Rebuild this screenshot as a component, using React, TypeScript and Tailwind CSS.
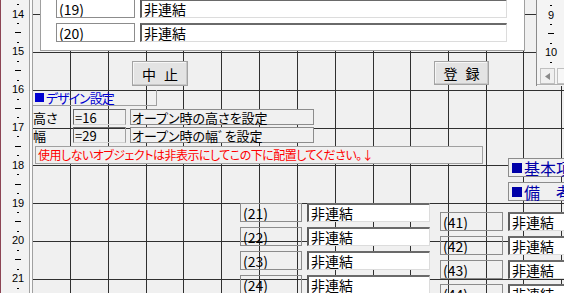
import React from "react";

const VX = [37, 75, 113, 150, 188, 226, 264, 302, 340, 377, 415, 453, 490, 528];
const HY = [14, 52, 90, 128, 165, 203, 241, 279];

function Grid() {
  return (
    <svg className="absolute inset-0" width="531" height="293" shapeRendering="crispEdges">
      {VX.map((x) => (
        <line key={"v" + x} x1={x + 0.5} y1={0} x2={x + 0.5} y2={293} stroke="#303030" strokeWidth={1} />
      ))}
      {HY.map((y) => (
        <line key={"h" + y} x1={0} y1={y + 0.5} x2={531} y2={y + 0.5} stroke="#303030" strokeWidth={1} />
      ))}
    </svg>
  );
}

function RulerSegment({ n }: { n: string }) {
  return (
    <div className="h-[37.8px] flex flex-col">
      <div className="h-[9.45px] flex items-center justify-center text-[11px] leading-none font-['Liberation_Sans',sans-serif] text-black">
        {n}
      </div>
      <div className="h-[9.45px] flex items-center justify-center">
        <div className="w-[2px] h-px bg-black" />
      </div>
      <div className="h-[9.45px] flex items-center justify-center">
        <div className="w-[6px] h-px bg-black" />
      </div>
      <div className="h-[9.45px] flex items-center justify-center">
        <div className="w-[2px] h-px bg-black" />
      </div>
    </div>
  );
}

function LeftRuler() {
  const nums = ["", "14", "15", "16", "17", "18", "19", "20", "21"];
  return (
    <div className="flex-none w-[33px] h-full flex">
      <div className="w-px h-full bg-[#8c4454]" />
      <div className="w-[28px] h-full bg-[#f2f2f2] overflow-hidden pl-[6px]">
        <div className="flex flex-col mt-[-28.5px]">
          {nums.map((n, i) => (
            <RulerSegment key={i} n={n} />
          ))}
        </div>
      </div>
      <div className="w-px h-full bg-[#a0a0a0]" />
      <div className="w-[2px] h-full bg-[#fafafa]" />
      <div className="w-px h-full bg-[#a0a0a0]" />
    </div>
  );
}

function TextBox({ className, children }: { className: string; children?: React.ReactNode }) {
  return (
    <div
      className={
        "bg-white border-t-2 border-l-2 border-t-[#6a6a6a] border-l-[#5a5a5a] border-r border-b border-r-[#dcdcdc] border-b-[#dcdcdc] flex items-center pl-[2px] text-[14px] leading-none text-black whitespace-nowrap overflow-hidden " +
        className
      }
    >
      {children}
    </div>
  );
}

function Label({ className, children }: { className: string; children?: React.ReactNode }) {
  return (
    <div
      className={
        "border border-[#8c8c8c] flex items-center pl-[2px] text-[14px] leading-none text-black whitespace-nowrap overflow-hidden " +
        className
      }
    >
      {children}
    </div>
  );
}

function Field({ num, labelW, boxW }: { num: number; labelW: string; boxW: string }) {
  return (
    <div className="flex gap-[5px] h-[19px]">
      <Label className={labelW}>({num})</Label>
      <TextBox className={boxW}>非連結</TextBox>
    </div>
  );
}

function Button({ className, a, b }: { className: string; a: string; b: string }) {
  return (
    <div
      className={
        "absolute bg-[#e3e3e3] border border-[#a3a3a3] shadow-[inset_-1px_-1px_0_#c8c8c8,inset_1px_1px_0_#f6f6f6] flex items-center justify-center gap-[8px] text-[14px] leading-none text-black " +
        className
      }
    >
      <span>{a}</span>
      <span>{b}</span>
    </div>
  );
}

function RightRuler() {
  const nums = ["", "9", "10"];
  return (
    <div className="absolute left-[503px] top-0 w-[28px] h-[86px] flex flex-col bg-[#f4f4f4] border-l border-[#8a8a8a]">
      <div className="h-[68px] overflow-hidden">
        <div className="flex flex-col mt-[-27.5px] pl-[1px]">
          {nums.map((n, i) => (
            <RulerSegment key={i} n={n} />
          ))}
        </div>
      </div>
      <div className="h-[17px] flex gap-[2px] pl-[3px] border-b border-[#b0b0b0]">
        <div className="w-[15px] h-full border border-[#c0c0c0] bg-[#f0f0f0] flex items-center justify-center">
          <svg width="5" height="7" viewBox="0 0 5 7">
            <polygon points="5,0 5,7 0,3.5" fill="#8a8a8a" />
          </svg>
        </div>
        <div className="flex-1 h-full border-l border-t border-b border-[#c0c0c0] bg-[#f7f7f7]" />
      </div>
    </div>
  );
}

export default function App() {
  return (
    <div className="w-[564px] h-[293px] overflow-hidden flex bg-[#f0f0f0] font-['Noto_Sans_CJK_JP',sans-serif] [font-feature-settings:'palt']">
      <LeftRuler />
      <div className="relative flex-1 h-full overflow-hidden bg-[#f0f0f0]">
        <Grid />

        {/* top subform panel */}
        <div className="absolute left-[7px] top-[-2px] w-[485px] h-[53px] bg-white border border-[#a0a0a0]" />
        <div className="absolute left-[23px] top-[-1px] flex flex-col gap-[5px]">
          <Field num={19} labelW="w-[79px]" boxW="w-[367px]" />
          <Field num={20} labelW="w-[79px]" boxW="w-[367px]" />
        </div>

        <RightRuler />

        {/* buttons */}
        <Button className="left-[99px] top-[61px] w-[56px] h-[25px]" a="中" b="止" />
        <Button className="left-[401px] top-[61px] w-[55px] h-[24px]" a="登" b="録" />

        {/* design settings */}
        <div className="absolute left-0 top-[90px] w-[124px] h-[16px] border-r border-b border-[#a0a0a0] flex items-center text-[13px] leading-none tracking-[-1px] text-[#0000d0] whitespace-nowrap">
          <span className="w-[9px] h-[9px] bg-[#0000d0] ml-[2px] mr-[2px]" />
          デザイン設定
        </div>
        <div className="absolute left-0 top-[109px] flex flex-col gap-[2px] text-[13px] leading-none text-black">
          <div className="flex h-[16px]">
            <div className="w-[40px] flex items-center">高さ</div>
            <div className="w-[53px] border-l border-t border-[#6a6a6a] border-r-[#a0a0a0] border-r border-b border-b-[#d0d0d0] flex items-center pl-[1px]">=16</div>
            <div className="ml-[4px] w-[184px] border border-[#8c8c8c] bg-[#f0f0f0] flex items-center pl-[1px] whitespace-nowrap">オープン時の高さを設定</div>
          </div>
          <div className="flex h-[16px]">
            <div className="w-[40px] flex items-center">幅</div>
            <div className="w-[53px] border-l border-t border-[#6a6a6a] border-r-[#a0a0a0] border-r border-b border-b-[#d0d0d0] flex items-center pl-[1px]">=29</div>
            <div className="ml-[4px] w-[184px] border border-[#8c8c8c] bg-[#f0f0f0] flex items-center pl-[1px] whitespace-nowrap">オープン時の幅ﾞを設定</div>
          </div>
        </div>
        <div className="absolute left-[2px] top-[146px] w-[448px] h-[18px] border border-[#a0a0a0] bg-[#f0f0f0] flex items-center pl-[2px] text-[12px] leading-none tracking-[-0.5px] text-[#ff0000] whitespace-nowrap">
          使用しないオブジェクトは非表示にしてこの下に配置してください。↓
        </div>

        {/* right section labels */}
        <div className="absolute left-[475px] top-[158px] flex flex-col gap-[5px] text-[16px] leading-none text-[#0000a8]">
          <div className="w-[70px] h-[19px] border border-[#8c8c8c] bg-[#f0f0f0] flex items-center whitespace-nowrap">
            <span className="w-[10px] h-[10px] bg-[#0000a8] ml-[3px] mr-[2px] flex-none" />
            基本項目
          </div>
          <div className="w-[70px] h-[19px] border border-[#8c8c8c] bg-[#f0f0f0] flex items-center whitespace-nowrap">
            <span className="w-[10px] h-[10px] bg-[#0000a8] ml-[3px] mr-[2px] flex-none" />
            備　考
          </div>
        </div>

        {/* field columns */}
        <div className="absolute left-[207px] top-[203px] flex flex-col gap-[5px]">
          <Field num={21} labelW="w-[62px]" boxW="w-[123px]" />
          <Field num={22} labelW="w-[62px]" boxW="w-[123px]" />
          <Field num={23} labelW="w-[62px]" boxW="w-[123px]" />
          <Field num={24} labelW="w-[62px]" boxW="w-[123px]" />
        </div>
        <div className="absolute left-[407px] top-[212px] flex flex-col gap-[5px]">
          <Field num={41} labelW="w-[63px]" boxW="w-[100px]" />
          <Field num={42} labelW="w-[63px]" boxW="w-[100px]" />
          <Field num={43} labelW="w-[63px]" boxW="w-[100px]" />
          <Field num={44} labelW="w-[63px]" boxW="w-[100px]" />
        </div>
      </div>
    </div>
  );
}
